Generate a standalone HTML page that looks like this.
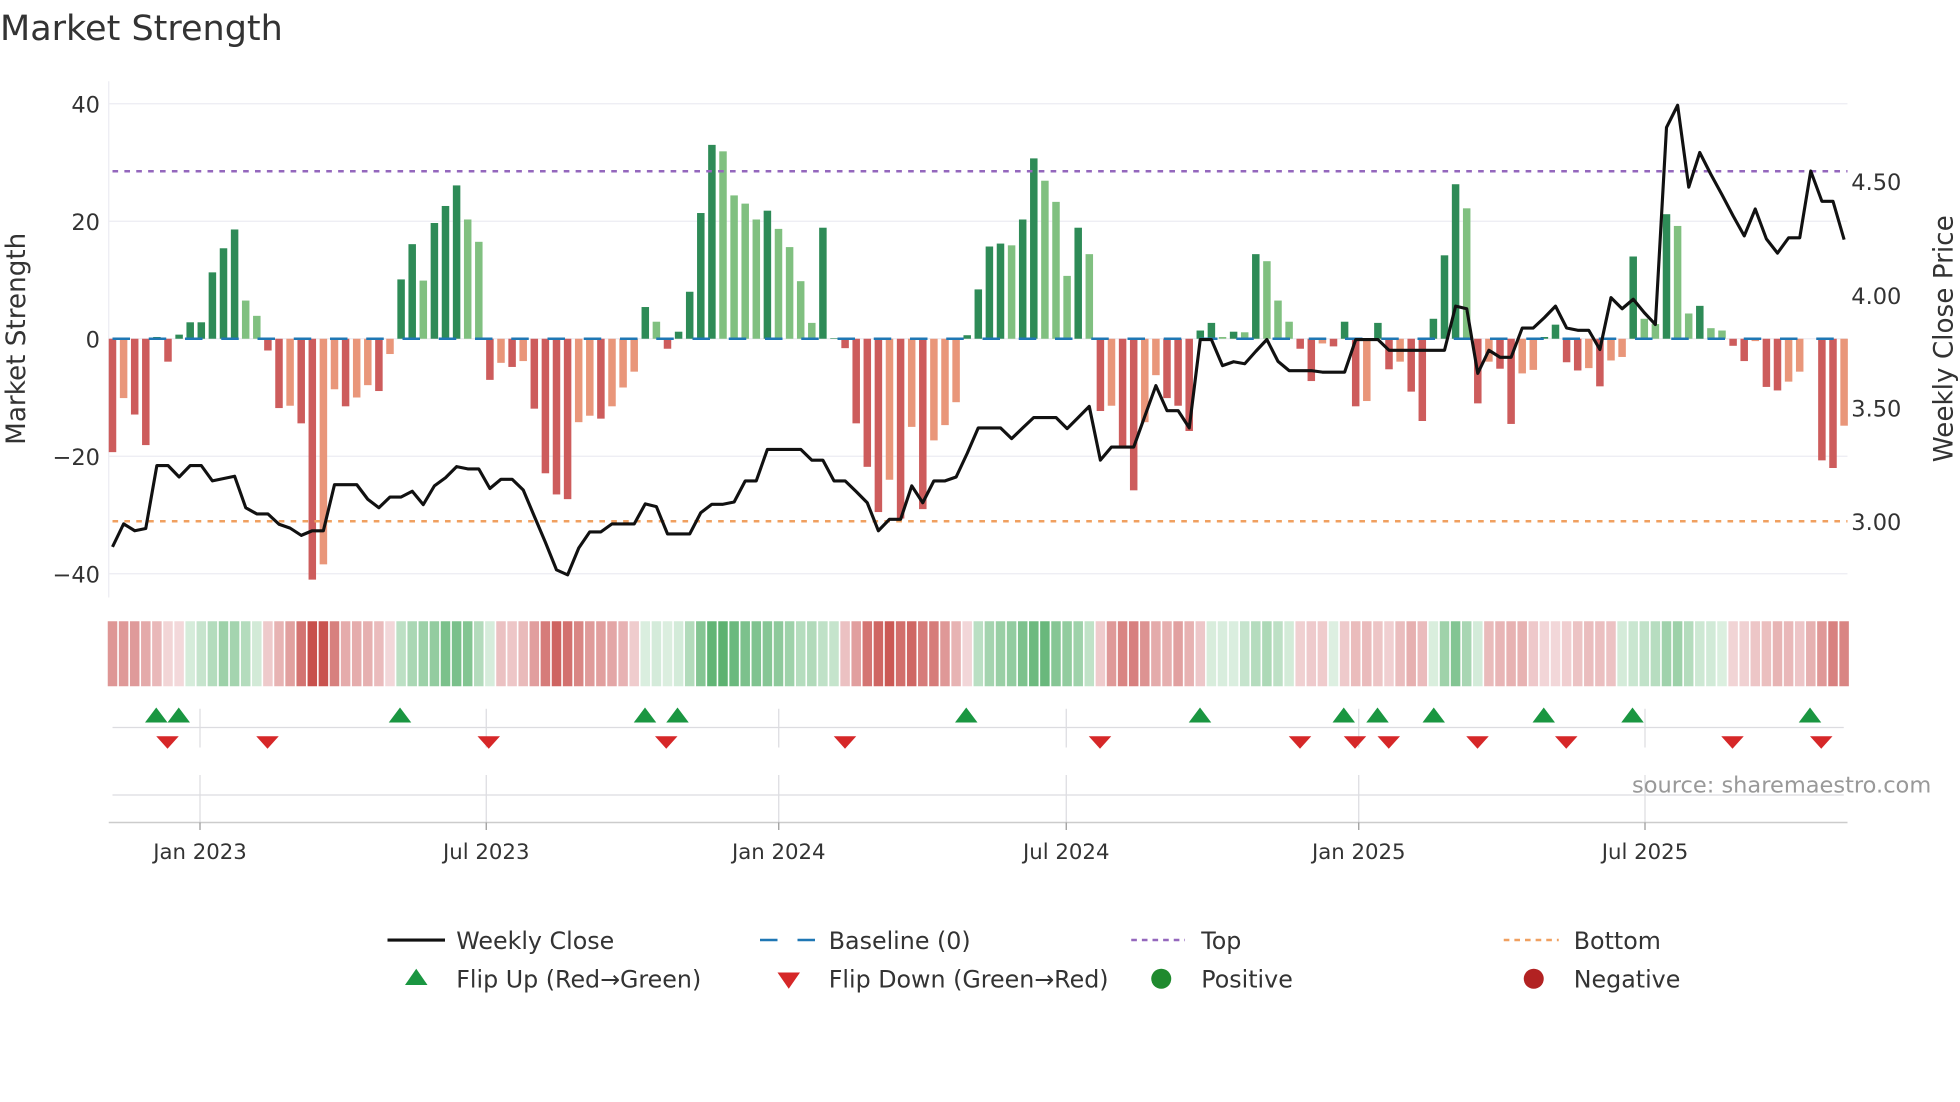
<!DOCTYPE html>
<html><head><meta charset="utf-8"><style>
html,body{margin:0;padding:0;background:#fff;}
svg{display:block;font-family:"DejaVu Sans","Liberation Sans",sans-serif;}
</style></head><body>
<svg id="c" width="1960" height="1102" viewBox="0 0 1568 881.6" xmlns="http://www.w3.org/2000/svg">
<rect width="1568" height="882" fill="#fff"/>
<text x="0" y="32" font-size="28" fill="#333">Market Strength</text>
<g stroke="#ececf2" stroke-width="1">
<line x1="87" y1="83" x2="1478" y2="83"/><line x1="87" y1="177" x2="1478" y2="177"/>
<line x1="87" y1="365" x2="1478" y2="365"/><line x1="87" y1="459" x2="1478" y2="459"/>
<line x1="87" y1="271" x2="1478" y2="271"/>
<line x1="87" y1="65" x2="87" y2="478"/>
</g>
<g font-size="18" fill="#333" text-anchor="end">
<text x="80" y="90">40</text><text x="80" y="184">20</text><text x="80" y="278">0</text>
<text x="80" y="372">−20</text><text x="80" y="466">−40</text>
</g>
<g font-size="18" fill="#333">
<text x="1481" y="152">4.50</text><text x="1481" y="243">4.00</text>
<text x="1481" y="333">3.50</text><text x="1481" y="424">3.00</text>
</g>
<text transform="translate(20,271) rotate(-90)" font-size="21" fill="#333" text-anchor="middle">Market Strength</text>
<text transform="translate(1562,271) rotate(-90)" font-size="21" fill="#333" text-anchor="middle">Weekly Close Price</text>
<g id="bars"></g>
<line x1="90" y1="271" x2="1478" y2="271" stroke="#1f77b4" stroke-width="2" stroke-dasharray="14 15"/>
<line x1="90" y1="137" x2="1478" y2="137" stroke="#9467bd" stroke-width="2" stroke-dasharray="4.5 5"/>
<line x1="90" y1="417" x2="1478" y2="417" stroke="#f0a060" stroke-width="2" stroke-dasharray="4.5 5"/>
<polyline id="price" fill="none" stroke="#111" stroke-width="2.5" stroke-linejoin="round"/>
<g id="strip"></g>
<g stroke="#dcdce0" stroke-width="1">
<line x1="90" y1="582" x2="1475" y2="582"/>
<line x1="90" y1="636" x2="1475" y2="636"/>
<line x1="160" y1="567" x2="160" y2="598"/><line x1="389" y1="567" x2="389" y2="598"/>
<line x1="623" y1="567" x2="623" y2="598"/><line x1="853" y1="567" x2="853" y2="598"/>
<line x1="1087" y1="567" x2="1087" y2="598"/><line x1="1316" y1="567" x2="1316" y2="598"/>
<line x1="160" y1="620" x2="160" y2="658"/><line x1="389" y1="620" x2="389" y2="658"/>
<line x1="623" y1="620" x2="623" y2="658"/><line x1="853" y1="620" x2="853" y2="658"/>
<line x1="1087" y1="620" x2="1087" y2="658"/><line x1="1316" y1="620" x2="1316" y2="658"/>
</g>
<line x1="87" y1="658" x2="1478" y2="658" stroke="#ccc" stroke-width="1.2"/>
<g stroke="#999" stroke-width="1">
<line x1="160" y1="658" x2="160" y2="664"/><line x1="389" y1="658" x2="389" y2="664"/>
<line x1="623" y1="658" x2="623" y2="664"/><line x1="853" y1="658" x2="853" y2="664"/>
<line x1="1087" y1="658" x2="1087" y2="664"/><line x1="1316" y1="658" x2="1316" y2="664"/>
</g>
<g id="marks"></g>
<text x="1545" y="634" font-size="18" fill="#999" text-anchor="end">source: sharemaestro.com</text>
<g font-size="17" fill="#333" text-anchor="middle">
<text x="160" y="687">Jan 2023</text><text x="389" y="687">Jul 2023</text>
<text x="623" y="687">Jan 2024</text><text x="853" y="687">Jul 2024</text>
<text x="1087" y="687">Jan 2025</text><text x="1316" y="687">Jul 2025</text>
</g>
<g font-size="19" fill="#333">
<line x1="310" y1="752" x2="356" y2="752" stroke="#111" stroke-width="2.5"/>
<text x="365" y="759">Weekly Close</text>
<line x1="608" y1="752" x2="652" y2="752" stroke="#1f77b4" stroke-width="2" stroke-dasharray="14 16"/>
<text x="663" y="759">Baseline (0)</text>
<line x1="905" y1="752" x2="948" y2="752" stroke="#9467bd" stroke-width="2" stroke-dasharray="4.5 4"/>
<text x="961" y="759">Top</text>
<line x1="1203" y1="752" x2="1247" y2="752" stroke="#f0a060" stroke-width="2" stroke-dasharray="4.5 4"/>
<text x="1259" y="759">Bottom</text>
<polygon points="324,788 342,788 333,775" fill="#1a9641"/>
<text x="365" y="790">Flip Up (Red→Green)</text>
<polygon points="622,778 640,778 631,791" fill="#d62728"/>
<text x="663" y="790">Flip Down (Green→Red)</text>
<circle cx="929" cy="783" r="8" fill="#1f8a2e"/>
<text x="961" y="790">Positive</text>
<circle cx="1227" cy="783" r="8" fill="#b22222"/>
<text x="1259" y="790">Negative</text>
</g>
</svg>
<script>
var V=[[-19.3,'d'],[-10.1,'l'],[-12.9,'d'],[-18.1,'d'],[0.3,'d'],[-3.9,'d'],[0.7,'d'],[2.8,'d'],[2.8,'d'],[11.3,'d'],[15.4,'d'],[18.6,'d'],[6.5,'l'],[3.9,'l'],[-2,'d'],[-11.8,'d'],[-11.4,'l'],[-14.4,'d'],[-41,'d'],[-38.4,'l'],[-8.6,'l'],[-11.5,'d'],[-10,'l'],[-7.9,'l'],[-8.9,'d'],[-2.6,'l'],[10.1,'d'],[16.1,'d'],[9.9,'l'],[19.7,'d'],[22.6,'d'],[26.1,'d'],[20.3,'l'],[16.5,'l'],[-7,'d'],[-4.1,'l'],[-4.8,'d'],[-3.8,'l'],[-11.9,'d'],[-22.9,'d'],[-26.5,'d'],[-27.3,'d'],[-14.2,'l'],[-13.1,'l'],[-13.6,'d'],[-11.5,'l'],[-8.3,'l'],[-5.6,'l'],[5.4,'d'],[2.9,'l'],[-1.7,'d'],[1.2,'d'],[8,'d'],[21.4,'d'],[33,'d'],[31.9,'l'],[24.4,'l'],[23,'l'],[20.3,'l'],[21.8,'d'],[18.7,'l'],[15.6,'l'],[9.8,'l'],[2.7,'l'],[18.9,'d'],[0.1,'d'],[-1.6,'d'],[-14.4,'d'],[-21.8,'d'],[-29.5,'d'],[-24,'l'],[-30.6,'d'],[-15,'l'],[-29,'d'],[-17.3,'l'],[-14.7,'l'],[-10.8,'l'],[0.6,'d'],[8.4,'d'],[15.7,'d'],[16.2,'d'],[15.9,'l'],[20.3,'d'],[30.7,'d'],[26.9,'l'],[23.3,'l'],[10.7,'l'],[18.9,'d'],[14.4,'l'],[-12.3,'d'],[-11.4,'l'],[-18.2,'d'],[-25.8,'d'],[-14.2,'l'],[-6.2,'l'],[-10.1,'d'],[-11.4,'d'],[-15.7,'d'],[1.4,'d'],[2.7,'d'],[0.3,'l'],[1.2,'d'],[1.1,'l'],[14.4,'d'],[13.2,'l'],[6.5,'l'],[2.9,'l'],[-1.7,'d'],[-7.2,'d'],[-0.8,'l'],[-1.3,'d'],[2.9,'d'],[-11.5,'d'],[-10.6,'l'],[2.7,'d'],[-5.2,'d'],[-3.9,'l'],[-9,'d'],[-14,'d'],[3.4,'d'],[14.2,'d'],[26.3,'d'],[22.2,'l'],[-11,'d'],[-3.9,'l'],[-5.1,'d'],[-14.5,'d'],[-5.9,'l'],[-5.3,'l'],[0.3,'d'],[2.4,'d'],[-4,'d'],[-5.4,'d'],[-5,'l'],[-8.1,'d'],[-3.7,'l'],[-3.1,'l'],[14,'d'],[3.4,'l'],[2.5,'l'],[21.2,'d'],[19.2,'l'],[4.3,'l'],[5.6,'d'],[1.8,'l'],[1.4,'l'],[-1.2,'d'],[-3.8,'d'],[-0.4,'l'],[-8.2,'d'],[-8.8,'d'],[-7.3,'l'],[-5.6,'l'],[0,'d'],[-20.7,'d'],[-22,'d'],[-14.8,'l']];
var P={0:1192,1:1132,2:1150,3:1144,4:980,5:980,6:1010,7:980,8:980,9:1020,11:1008,12:1090,13:1106,14:1106,15:1133,16:1143,17:1162,18:1150,19:1150,20:1030,22:1030,23:1068,24:1090,25:1062,26:1062,27:1047,28:1082,29:1033,30:1012,31:983,32:989,33:989,34:1040,35:1016,36:1016,37:1044,38:1112,39:1180,40:1252,41:1265,42:1195,43:1153,44:1153,45:1132,46:1132,47:1132,48:1080,49:1087,50:1158,51:1158,52:1158,53:1103,54:1081,55:1081,56:1075,57:1020,58:1020,59:938,60:938,61:938,62:938,63:966,64:966,65:1020,66:1020,67:1048,68:1077,69:1150,70:1120,71:1120,72:1033,73:1077,74:1020,75:1020,76:1010,77:948,78:882,79:882,80:882,81:910,82:882,83:855,84:855,85:855,86:884,87:855,88:826,89:966,90:932,91:932,92:932,93:852,94:772,95:837,96:837,97:882,98:652,99:652,100:720,101:710,102:715,103:683,104:652,105:709,106:733,107:733,108:733,109:737,110:737,111:737,112:652,113:652,114:652,115:680,116:680,117:680,118:680,119:680,120:680,121:565,122:572,123:740,124:680,125:698,126:698,127:622,128:622,129:595,130:565,131:622,132:628,133:628,134:678,135:543,136:572,137:547,138:582,139:613,140:100,141:42,142:255,143:165,144:222,145:275,146:330,147:382,148:312,149:390,150:427,151:387,152:387,153:213,154:292,155:292,156:392};
var NS="http://www.w3.org/2000/svg";
function el(t,a,p){var e=document.createElementNS(NS,t);for(var k in a)e.setAttribute(k,a[k]);p.appendChild(e);return e;}
var bars=document.getElementById('bars'),strip=document.getElementById('strip');
function X(i){return 90+i*8.88;}
function mix(a,b,t){var r=[];for(var i=0;i<3;i++)r.push(Math.round(a[i]+(b[i]-a[i])*t));return 'rgb('+r.join(',')+')';}
for(var i=0;i<V.length;i++){
 var v=V[i][0],s=V[i][1],x=X(i),h=Math.abs(v)*4.7;
 var c=v>=0?(s=='d'?'#2e8b57':'#80c080'):(s=='d'?'#cd5c5c':'#e9967a');
 if(h>0.3) el('rect',{x:x-3,y:v>=0?271-h:271,width:6,height:h,fill:c},bars);
 var a=0,n=0;for(var j=i-1;j<=i+1;j++){if(j>=0&&j<V.length){a+=V[j][0];n++;}}a/=n;
 var t=Math.min(1,Math.abs(a)/30);
 var sc=a>=0?mix([222,240,226],[92,178,112],t):mix([243,217,219],[200,80,76],t);
 el('rect',{x:x-3.8,y:497,width:7.6,height:52,fill:sc},strip);
}
var pts=[];for(var k in P){pts.push(X(+k).toFixed(1)+','+(83+(P[k]-38)*0.3072).toFixed(1));}
document.getElementById('price').setAttribute('points',pts.join(' '));
var mk=document.getElementById('marks');
[125,143,320,516,542,773,960,1075,1102,1147,1235,1306,1448].forEach(function(x){el('polygon',{points:(x-9)+',578 '+(x+9)+',578 '+x+',566',fill:'#1a9641'},mk);});
[134,214,391,533,676,880,1040,1084,1111,1182,1253,1386,1457].forEach(function(x){el('polygon',{points:(x-9)+',589 '+(x+9)+',589 '+x+',599',fill:'#d62728'},mk);});
</script>
</body></html>
